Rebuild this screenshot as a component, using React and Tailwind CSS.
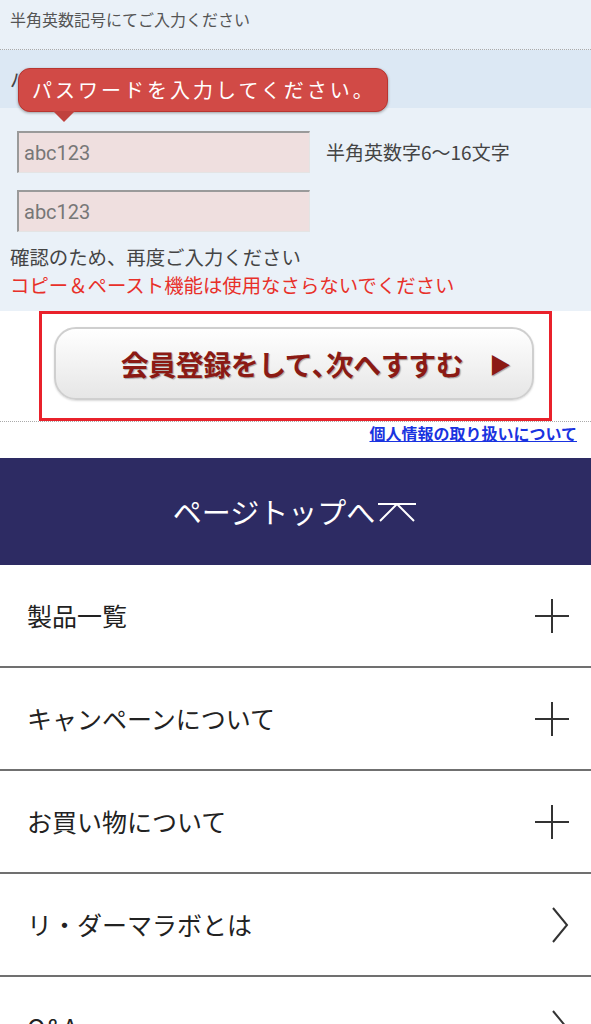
import React from 'react';

const jp = { fontFamily: '"Noto Sans CJK JP", "Noto Sans", sans-serif' };

const menuItems = [
  { label: '製品一覧', icon: 'plus' },
  { label: 'キャンペーンについて', icon: 'plus' },
  { label: 'お買い物について', icon: 'plus' },
  { label: 'リ・ダーマラボとは', icon: 'chevron' },
  { label: 'Q&A', icon: 'chevron' },
];

const PlusIcon = () => (
  <svg width="34" height="34" viewBox="0 0 34 34">
    <path d="M17 0V34M0 17H34" stroke="#333" strokeWidth="2" />
  </svg>
);

const ChevronIcon = () => (
  <svg width="18" height="36" viewBox="0 0 18 36">
    <path d="M2 1L16 18L2 35" stroke="#333" strokeWidth="2" fill="none" />
  </svg>
);

const InputBox = () => (
  <div
    className="w-[293px] h-[42px] bg-[#efdfdf] border-t-2 border-l-2 border-[#9a9a9a] border-r border-b border-r-[#e4e4e4] border-b-[#e4e4e4] flex items-center pl-[5px] text-[20px] text-[#777]"
    style={{ fontFamily: 'Roboto, "Liberation Sans", sans-serif' }}
  >
    abc123
  </div>
);

const App = () => {
  return (
    <div className="w-[591px] h-[1024px] overflow-hidden bg-white" style={jp}>
      {/* top note */}
      <div className="h-[50px] bg-[#eaf1f8] border-b border-dotted border-[#aaaaaa] px-[10px] pt-[8px] text-[16px] leading-[22px] text-[#555]">
        半角英数記号にてご入力ください
      </div>

      {/* password label with tooltip */}
      <div className="relative h-[58px] bg-[#dce8f4] flex items-center px-[10px] text-[19px] text-[#444]">
        パスワード
        <div className="absolute left-[18px] top-[18px] w-[370px] h-[44px] rounded-[12px] bg-[#d14a46] border border-[#b83530] shadow-[0_1px_3px_rgba(0,0,0,0.35)] flex items-center pl-[13px] text-white text-[20px] tracking-[3px]">
          パスワードを入力してください。
          <div className="absolute left-[34px] bottom-[-11px] w-0 h-0 border-l-[11px] border-r-[11px] border-t-[11px] border-l-transparent border-r-transparent border-t-[#c0413d]" />
        </div>
      </div>

      {/* inputs */}
      <div className="bg-[#eaf1f8] pt-[23px] pb-[13px] border-b border-dotted border-[#aaaaaa]">
        <div className="flex items-center pl-[17px]">
          <InputBox />
          <span className="ml-[16px] text-[19px] text-[#444]">半角英数字6〜16文字</span>
        </div>
        <div className="pl-[17px] mt-[17px]">
          <InputBox />
        </div>
        <div className="px-[10px] mt-[11px] text-[19.4px] leading-[28px]">
          <p className="text-[#444]">確認のため、再度ご入力ください</p>
          <p className="text-[#e8302a]">コピー＆ペースト機能は使用なさらないでください</p>
        </div>
      </div>

      {/* submit */}
      <div className="bg-white">
        <div className="ml-[39px] w-[513px] h-[110px] -mt-[2px] border-[3px] border-[#e9212b] px-[12px] pt-[13px] relative">
          <button
            className="w-[480px] h-[73px] rounded-[22px] border-2 border-[#cfcfcf] bg-gradient-to-b from-[#ffffff] to-[#e6e6e6] shadow-[0_1px_2px_rgba(0,0,0,0.15)] flex items-center justify-center pl-[44px] text-[28px] font-bold text-[#8b1a14]"
            style={{ ...jp, textShadow: '1px 1px 1px rgba(0,0,0,0.3)' }}
          >
            <span className="tracking-[-0.5px]">会員登録をして､次へすすむ</span>
            <span className="ml-[26px] text-[22px]">▶</span>
          </button>
        </div>
        <div className="border-t border-dotted border-[#aaaaaa] h-[37px] flex justify-end pr-[14px]">
          <a href="#" className="text-[16px] font-bold text-[#1a33e0] underline leading-[20px] mt-[1px]">
            個人情報の取り扱いについて
          </a>
        </div>
      </div>

      {/* page top */}
      <div className="h-[107px] bg-[#2d2b63] flex items-center justify-center text-white text-[29px] pr-[2px]">
        <span>ページトップへ</span>
        <svg width="38" height="20" viewBox="0 0 38 20" className="ml-[3px] mt-[2px]">
          <path d="M0 1H38" stroke="#fff" strokeWidth="2" />
          <path d="M2 18L19 1L36 18" stroke="#fff" strokeWidth="2" fill="none" />
        </svg>
      </div>

      {/* menu */}
      <ul>
        {menuItems.map((item) => (
          <li
            key={item.label}
            className="h-[103px] border-b-2 border-[#707070] flex items-center justify-between pl-[27px] pr-[22px] text-[25px] text-[#222]"
          >
            <span>{item.label}</span>
            {item.icon === 'plus' ? <PlusIcon /> : <ChevronIcon />}
          </li>
        ))}
      </ul>
    </div>
  );
};

export default App;
